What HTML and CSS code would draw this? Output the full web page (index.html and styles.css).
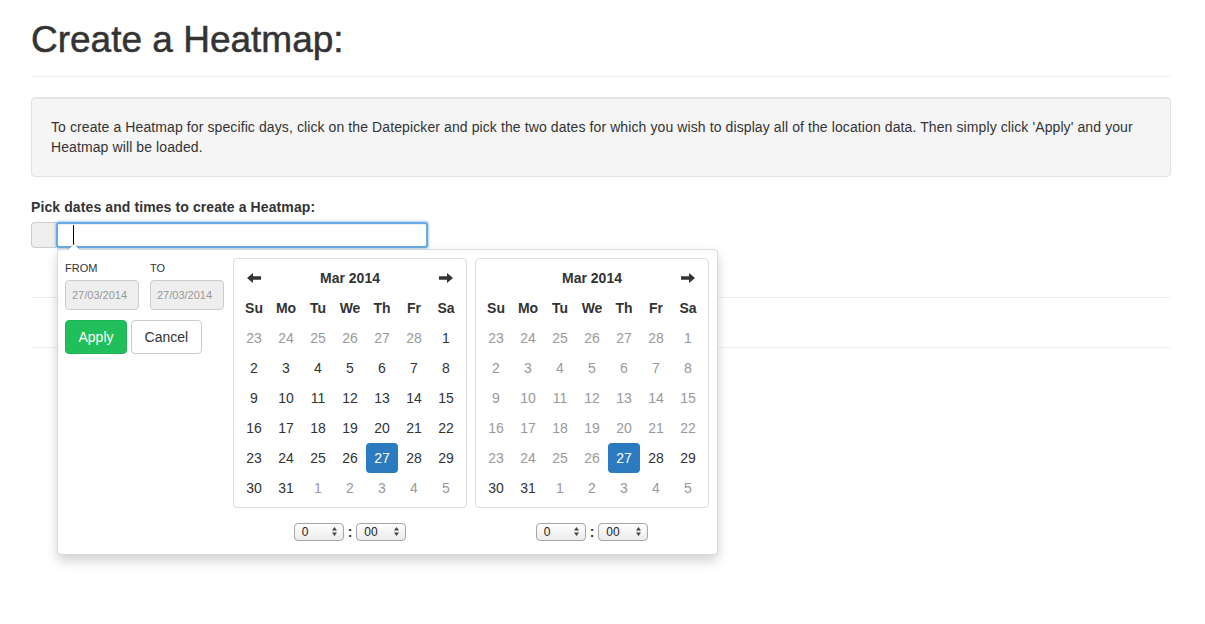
FILE: index.html
```html
<!DOCTYPE html>
<html>
<head>
<meta charset="utf-8">
<title>Create a Heatmap</title>
<link rel="stylesheet" href="styles.css">
</head>
<body>
<div class="container">
  <div class="page-header"><h1>Create a Heatmap:</h1></div>
  <div class="well"><p>To create a Heatmap for specific days, click on the Datepicker and pick the two dates for which you wish to display all of the location data. Then simply click 'Apply' and your Heatmap will be loaded.</p></div>
  <div class="form-group">
    <label class="pick-label">Pick dates and times to create a Heatmap:</label>
    <div class="input-group">
      <span class="addon"></span>
      <span class="input-wrap"><input class="form-control" type="text"><span class="caret"></span></span>

      <div class="daterangepicker">
        <div class="ranges">
          <div class="range-inputs">
            <div class="ri">
              <label class="mini-label">From</label>
              <input class="input-mini" type="text" value="27/03/2014" disabled>
            </div>
            <div class="ri ri-to">
              <label class="mini-label">To</label>
              <input class="input-mini" type="text" value="27/03/2014" disabled>
            </div>
          </div>
          <div class="btns">
            <button class="btn btn-apply">Apply</button>
            <button class="btn btn-cancel">Cancel</button>
          </div>
        </div>

        <div class="calendar">
          <div class="calendar-date">
            <table>
              <thead>
                <tr>
                  <th class="nav"><svg width="14" height="10" viewBox="0 0 14 10"><path d="M0 5 L6 0 L6 3.2 L14 3.2 L14 6.8 L6 6.8 L6 10 Z" fill="#333"/></svg></th>
                  <th colspan="5" class="month">Mar 2014</th>
                  <th class="nav"><svg width="14" height="10" viewBox="0 0 14 10"><path d="M14 5 L8 0 L8 3.2 L0 3.2 L0 6.8 L8 6.8 L8 10 Z" fill="#333"/></svg></th>
                </tr>
                <tr class="dow"><th>Su</th><th>Mo</th><th>Tu</th><th>We</th><th>Th</th><th>Fr</th><th>Sa</th></tr>
              </thead>
              <tbody>
                <tr><td class="off">23</td><td class="off">24</td><td class="off">25</td><td class="off">26</td><td class="off">27</td><td class="off">28</td><td>1</td></tr>
                <tr><td>2</td><td>3</td><td>4</td><td>5</td><td>6</td><td>7</td><td>8</td></tr>
                <tr><td>9</td><td>10</td><td>11</td><td>12</td><td>13</td><td>14</td><td>15</td></tr>
                <tr><td>16</td><td>17</td><td>18</td><td>19</td><td>20</td><td>21</td><td>22</td></tr>
                <tr><td>23</td><td>24</td><td>25</td><td>26</td><td class="active">27</td><td>28</td><td>29</td></tr>
                <tr><td>30</td><td>31</td><td class="off">1</td><td class="off">2</td><td class="off">3</td><td class="off">4</td><td class="off">5</td></tr>
              </tbody>
            </table>
          </div>
          <div class="calendar-time">
            <span class="sel"><select><option>0</option></select><svg class="sel-arrow" width="5" height="9" viewBox="0 0 5 9"><path d="M0 3.5 L2.5 0 L5 3.5 Z M0 5.5 L2.5 9 L5 5.5 Z" fill="#444"/></svg></span>
            <span class="colon">:</span>
            <span class="sel"><select><option>00</option></select><svg class="sel-arrow" width="5" height="9" viewBox="0 0 5 9"><path d="M0 3.5 L2.5 0 L5 3.5 Z M0 5.5 L2.5 9 L5 5.5 Z" fill="#444"/></svg></span>
          </div>
        </div>

        <div class="calendar">
          <div class="calendar-date">
            <table>
              <thead>
                <tr>
                  <th class="nav"></th>
                  <th colspan="5" class="month">Mar 2014</th>
                  <th class="nav"><svg width="14" height="10" viewBox="0 0 14 10"><path d="M14 5 L8 0 L8 3.2 L0 3.2 L0 6.8 L8 6.8 L8 10 Z" fill="#333"/></svg></th>
                </tr>
                <tr class="dow"><th>Su</th><th>Mo</th><th>Tu</th><th>We</th><th>Th</th><th>Fr</th><th>Sa</th></tr>
              </thead>
              <tbody>
                <tr><td class="off">23</td><td class="off">24</td><td class="off">25</td><td class="off">26</td><td class="off">27</td><td class="off">28</td><td class="off">1</td></tr>
                <tr><td class="off">2</td><td class="off">3</td><td class="off">4</td><td class="off">5</td><td class="off">6</td><td class="off">7</td><td class="off">8</td></tr>
                <tr><td class="off">9</td><td class="off">10</td><td class="off">11</td><td class="off">12</td><td class="off">13</td><td class="off">14</td><td class="off">15</td></tr>
                <tr><td class="off">16</td><td class="off">17</td><td class="off">18</td><td class="off">19</td><td class="off">20</td><td class="off">21</td><td class="off">22</td></tr>
                <tr><td class="off">23</td><td class="off">24</td><td class="off">25</td><td class="off">26</td><td class="active">27</td><td>28</td><td>29</td></tr>
                <tr><td>30</td><td>31</td><td class="off">1</td><td class="off">2</td><td class="off">3</td><td class="off">4</td><td class="off">5</td></tr>
              </tbody>
            </table>
          </div>
          <div class="calendar-time">
            <span class="sel"><select><option>0</option></select><svg class="sel-arrow" width="5" height="9" viewBox="0 0 5 9"><path d="M0 3.5 L2.5 0 L5 3.5 Z M0 5.5 L2.5 9 L5 5.5 Z" fill="#444"/></svg></span>
            <span class="colon">:</span>
            <span class="sel"><select><option>00</option></select><svg class="sel-arrow" width="5" height="9" viewBox="0 0 5 9"><path d="M0 3.5 L2.5 0 L5 3.5 Z M0 5.5 L2.5 9 L5 5.5 Z" fill="#444"/></svg></span>
          </div>
        </div>
      </div>
    </div>
  </div>
  <hr class="sep">
  <hr class="sep">
</div>
</body>
</html>
```

FILE: styles.css
```css
* { box-sizing: border-box; }

html, body {
  margin: 0;
  padding: 0;
  background: #fff;
}

html {
  min-height: 100%;
}

body {
  min-height: 624px;
  font-family: "Liberation Sans", Arial, Helvetica, sans-serif;
  font-size: 14px;
  line-height: 20px;
  letter-spacing: 0.1px;
  color: #333;
}

.container {
  width: 1140px;
  min-height: 600px;
  margin-left: 31px;
}

.page-header {
  border-bottom: 1px solid #eee;
  padding-bottom: 16px;
  margin-bottom: 20px;
}

.page-header h1 {
  margin: 20px 0 0;
  font-size: 37px;
  line-height: 39.6px;
  font-weight: 400;
  letter-spacing: 0;
  -webkit-text-stroke: 0.5px #333;
  color: #333;
}

.well {
  background: #f5f5f5;
  border: 1px solid #e3e3e3;
  border-radius: 4px;
  box-shadow: inset 0 1px 1px rgba(0,0,0,.05);
  padding: 19px;
  margin-bottom: 20px;
}

.well p {
  margin: 0;
}

.pick-label {
  display: block;
  font-weight: 700;
  margin-bottom: 5px;
}

.input-group {
  position: relative;
  display: flex;
  width: 397px;
  height: 26px;
}

.addon {
  width: 25px;
  height: 26px;
  background: #eee;
  border: 1px solid #ccc;
  border-right: 0;
  border-radius: 4px 0 0 4px;
}

.input-wrap {
  position: relative;
  flex: 1;
  height: 26px;
}

.form-control {
  display: block;
  width: 100%;
  height: 26px;
  margin: 0;
  border: 2px solid #6aa9e2;
  border-radius: 3px;
  box-shadow: 0 0 2px 1px rgba(120,175,230,.6), inset 0 1px 1px rgba(0,0,0,.075);
  outline: none;
  padding: 0 12px;
  font: inherit;
  background: #fff;
}

.caret {
  position: absolute;
  left: 17px;
  top: 3px;
  width: 1px;
  height: 20px;
  background: #000;
}

/* date range picker dropdown */
.daterangepicker {
  position: absolute;
  top: 27px;
  left: 26px;
  z-index: 10;
  display: flex;
  align-items: flex-start;
  padding: 4px;
  background: #fff;
  border: 1px solid rgba(0,0,0,.15);
  border-radius: 4px;
  box-shadow: 0 6px 12px rgba(0,0,0,.175);
  letter-spacing: 0;
}

.daterangepicker::before {
  content: '';
  position: absolute;
  top: -7px;
  left: 9px;
  border-left: 7px solid transparent;
  border-right: 7px solid transparent;
  border-bottom: 7px solid rgba(0,0,0,.2);
}

.daterangepicker::after {
  content: '';
  position: absolute;
  top: -6px;
  left: 10px;
  border-left: 6px solid transparent;
  border-right: 6px solid transparent;
  border-bottom: 6px solid #fff;
}

.ranges {
  width: 160px;
  margin: 4px 4px 4px 3px;
}

.range-inputs {
  display: flex;
}

.ri-to {
  padding-left: 11px;
}

.mini-label {
  display: block;
  font-size: 11px;
  height: 20px;
  line-height: 20px;
  margin-bottom: 2px;
  text-transform: uppercase;
  color: #333;
  width: 74px;
}

.input-mini {
  display: block;
  width: 74px;
  height: 30px;
  margin: 0 0 10px;
  padding: 0 6px;
  font: inherit;
  font-size: 11px;
  line-height: 30px;
  color: #999;
  background: #eee;
  border: 1px solid #ccc;
  border-radius: 4px;
}

.btns {
  display: flex;
  gap: 4px;
}

.btn {
  height: 34px;
  padding: 6px 12px;
  font: inherit;
  font-size: 14px;
  line-height: 20px;
  border-radius: 4px;
  border: 1px solid transparent;
  cursor: pointer;
}

.btn-apply {
  background: #21bf5b;
  border-color: #1eb355;
  color: #fff;
  padding: 6px 12.5px;
}

.btn-cancel {
  background: #fff;
  border-color: #ccc;
  color: #333;
  padding: 6px 12.5px;
}

.calendar {
  margin: 4px;
}

.calendar-date {
  border: 1px solid #ddd;
  border-radius: 4px;
  padding: 4px;
  background: #fff;
}

.calendar-date table {
  border-collapse: collapse;
  border-spacing: 0;
  width: 224px;
}

.calendar-date th,
.calendar-date td {
  width: 32px;
  height: 30px;
  padding: 0;
  text-align: center;
  vertical-align: middle;
  line-height: 30px;
  border-radius: 4px;
  white-space: nowrap;
}

.calendar-date th {
  font-weight: 700;
  color: #333;
}

.calendar-date th.nav svg {
  display: block;
  margin: 0 auto;
}

.calendar-date td {
  color: #333;
}

.calendar-date td.off {
  color: #999;
}

.calendar-date td.active {
  background: #2c7bc1;
  color: #fff;
}

.calendar-time {
  margin-top: 8px;
  height: 30px;
  line-height: 30px;
  text-align: center;
}

.sel {
  position: relative;
  display: inline-block;
  width: 50px;
  height: 18px;
  vertical-align: middle;
}

.sel select {
  -webkit-appearance: none;
  appearance: none;
  display: block;
  width: 100%;
  height: 18px;
  margin: 0;
  padding: 0 0 0 7px;
  border: 1px solid #a6a6a6;
  border-radius: 4px;
  background: linear-gradient(#fefefe, #ececec);
  font-family: "Liberation Sans", Arial, sans-serif;
  font-size: 12px;
  line-height: 16px;
  color: #222;
}

.sel-arrow {
  position: absolute;
  right: 7px;
  top: 4.5px;
  pointer-events: none;
}

.colon {
  display: inline-block;
  margin: 0;
  font-weight: 700;
  vertical-align: middle;
  line-height: 18px;
}

.sep {
  margin: 49px 0 0;
  border: 0;
  border-top: 1px solid #eee;
  height: 0;
}
```
